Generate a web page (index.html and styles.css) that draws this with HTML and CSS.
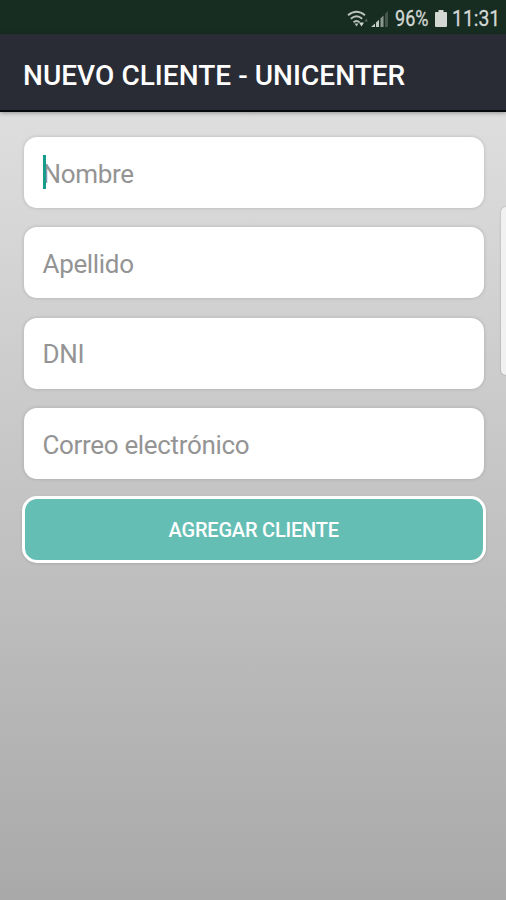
FILE: index.html
```html
<!DOCTYPE html>
<html lang="es">
<head>
<meta charset="utf-8">
<title>Nuevo cliente - Unicenter</title>
<link rel="stylesheet" href="styles.css">
</head>
<body>
<div class="screen">
  <div class="status">
    <svg class="wifi" width="22" height="18" viewBox="0 0 22 18" fill="none" stroke="#b8c1bb" stroke-width="1.9">
      <path d="M1 5.2Q9.5-1.8 18 5.2M3.8 8.700Q9.500 3.900 15.200 8.700M6.500 12.200Q9.500 9.600 12.500 12.200"/>
      <path d="M7.500 13.500h4l-2 3z" fill="#b8c1bb" stroke="none"/>
      <path d="M12 12.500h5l-2.500 4z" fill="#d0d6d2" stroke="none"/>
      <path d="M17.500 11.500l1.700-3 1.700 3z" fill="#59685f" stroke="none"/>
    </svg>
    <svg class="signal" width="18" height="18" viewBox="0 0 18 18">
      <path d="M0 17l4-3.500V17zM5 12.500l3-2.800V17H5z" fill="#c2cac5"/>
      <path d="M9.500 8.500l3-3V17h-3z" fill="#8b9790"/>
      <path d="M14 4l3-3v16h-3z" fill="#46564d"/>
    </svg>
    <span class="percent">96%</span>
    <svg class="battery" width="12" height="17" viewBox="0 0 12 18" preserveAspectRatio="none"><path d="M3.500 0h5v2H11q1 0 1 1v14q0 1-1 1H1q-1 0-1-1V3q0-1 1-1h2.500z" fill="#d3d8d5"/></svg>
    <span class="clock">11:31</span>
  </div>
  <header class="bar"><h1 class="title">NUEVO CLIENTE - UNICENTER</h1></header>
  <form class="form">
    <div class="field focused"><span class="hint">Nombre</span></div>
    <div class="field"><span class="hint">Apellido</span></div>
    <div class="field"><span class="hint">DNI</span></div>
    <div class="field"><span class="hint">Correo electrónico</span></div>
    <button class="submit" type="button">AGREGAR CLIENTE</button>
  </form>
  <div class="edge-handle"></div>
</div>
</body>
</html>
```
FILE: styles.css
```css
* { box-sizing: border-box; }
body { margin: 0; font-family: Roboto, sans-serif; }
.screen {
  position: relative;
  width: 506px;
  height: 900px;
  overflow: hidden;
  background: linear-gradient(#dedede 112px, #a9a9a9 900px);
}
.status {
  display: flex;
  align-items: center;
  height: 34px;
  padding: 3px 0 0 347px;
  background: #172d22;
  color: #d3d8d5;
  font-size: 22px;
  line-height: 30px;
  white-space: nowrap;
}
.status svg { flex: none; }
.status span { flex: none; transform-origin: 0 50%; -webkit-text-stroke: 0.3px #d3d8d5; }
.signal { margin-left: 2px; }
.percent { width: 36px; margin-left: 6px; transform: scaleX(.82); }
.battery { margin-left: 4px; }
.clock { width: 54px; margin-left: 5px; transform: scaleX(.88); }
.bar {
  display: flex;
  align-items: center;
  height: 78px;
  padding: 7px 23px 0;
  background: #292c35;
  border-bottom: 2px solid #08090c;
  box-shadow: 0 1px 4px rgba(0, 0, 0, .35);
}
.title {
  margin: 0;
  color: #fff;
  font-size: 28px;
  font-weight: 500;
  letter-spacing: 0.04px;
  line-height: 34px;
  white-space: nowrap;
}
.form {
  display: flex;
  flex-direction: column;
  padding: 25px 22.500px 0 24px;
}
.field {
  display: flex;
  align-items: center;
  height: 71px;
  margin-bottom: 19.400px;
  padding: 2px 18.500px 0;
  border-radius: 13px;
  background: #fff;
  box-shadow: 0 0 3px 1px rgba(0, 0, 0, .1);
}
.hint {
  color: #949494;
  font-size: 26px;
  letter-spacing: -0.33px;
  line-height: 32px;
}
.focused { position: relative; }
.focused::before {
  content: "";
  position: absolute;
  left: 18.500px;
  top: 18px;
  width: 3px;
  height: 34px;
  background: #159c8b;
}
.submit {
  height: 67px;
  margin: -3px -2px 0;
  padding: 2px 0 0;
  border: 3px solid #fff;
  border-radius: 15px;
  background: #65beb4;
  color: #fff;
  font: 500 20px/26px Roboto, sans-serif;
  letter-spacing: -0.2px;
  box-shadow: 0 1px 3px rgba(0, 0, 0, .12);
}
.edge-handle {
  position: absolute;
  left: 501px;
  top: 207px;
  width: 12px;
  height: 168px;
  border-radius: 5px;
  background: #f1f1f1;
  box-shadow: 0 0 2px rgba(0, 0, 0, .25);
}
```
